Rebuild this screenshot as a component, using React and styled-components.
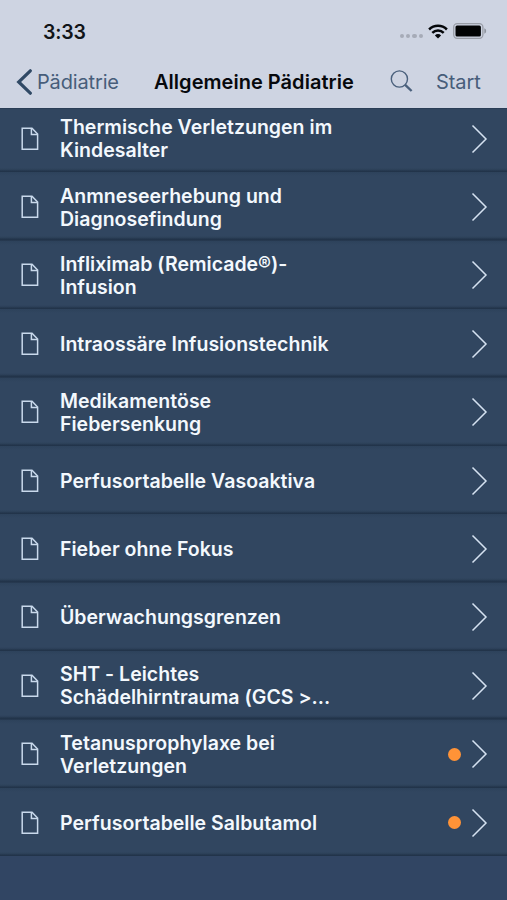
import styled, { createGlobalStyle } from "styled-components"

const documents = [
    { lines: ["Thermische Verletzungen im", "Kindesalter"] },
    { lines: ["Anmneseerhebung und", "Diagnosefindung"] },
    { lines: ["Infliximab (Remicade®)-", "Infusion"] },
    { lines: ["Intraossäre Infusionstechnik"] },
    { lines: ["Medikamentöse", "Fiebersenkung"] },
    { lines: ["Perfusortabelle Vasoaktiva"] },
    { lines: ["Fieber ohne Fokus"] },
    { lines: ["Überwachungsgrenzen"] },
    { lines: ["SHT - Leichtes", "Schädelhirntrauma (GCS >..."] },
    { lines: ["Tetanusprophylaxe bei", "Verletzungen"], unread: true },
    { lines: ["Perfusortabelle Salbutamol"], unread: true },
]

const FileIcon = () => (
    <svg width="18" height="24" viewBox="0 0 18 24" fill="none" stroke="#c9d9ec" strokeWidth="1.5">
        <path d="M1.2 1.2H11L16.6 7V22.3H1.2Z" />
        <path d="M10.4 1.4V7.4H16.4" />
    </svg>
)

const ChevronIcon = () => (
    <svg width="18" height="30" viewBox="0 0 18 30" fill="none" stroke="#d5e2f1" strokeWidth="1.5">
        <path d="M1.5 1.5L15 15L1.5 28.5" />
    </svg>
)

const BackIcon = () => (
    <svg width="16" height="26" viewBox="0 0 16 26" fill="none" stroke="#304965" strokeWidth="3.2">
        <path d="M14.3 1.8L2.7 13L14.3 24.2" strokeLinecap="round" />
    </svg>
)

const SearchIcon = () => (
    <svg width="24" height="24" viewBox="0 0 24 24" fill="none" stroke="#4a607c">
        <circle cx="9.4" cy="9" r="8.1" strokeWidth="1.4" />
        <path d="M15.2 14.9L21.6 21" strokeWidth="2.4" />
    </svg>
)

const WifiIcon = () => (
    <svg width="20" height="15" viewBox="0 0 20 15" fill="none" stroke="#05070a" strokeWidth="2.5">
        <path d="M1.1 5.5A12.6 12.6 0 0 1 18.9 5.5" />
        <path d="M4.3 8.8A8.1 8.1 0 0 1 15.7 8.8" />
        <path d="M10 14.6L6.9 11.4A4.4 4.4 0 0 1 13.1 11.4Z" fill="#05070a" stroke="none" />
    </svg>
)

const BatteryIcon = () => (
    <svg width="34" height="16" viewBox="0 0 34 16">
        <rect x="0.7" y="0.7" width="29.2" height="14.6" rx="3.5" fill="none" stroke="#999da7" strokeWidth="1.3" />
        <rect x="2.5" y="2.5" width="25.4" height="11" rx="1.5" fill="#020304" />
        <path d="M31.3 5.3Q33.2 6 33.2 8T31.3 10.7Z" fill="#8f949e" />
    </svg>
)

export default function App() {
    return (
        <Screen>
            <GlobalStyle />
            <Header>
                <StatusBar>
                    <Time>3:33</Time>
                    <StatusIcons>
                        <Signal>
                            <i />
                            <i />
                            <i />
                            <i />
                        </Signal>
                        <WifiIcon />
                        <BatteryIcon />
                    </StatusIcons>
                </StatusBar>
                <NavBar>
                    <BackButton>
                        <BackIcon />
                        <span>Pädiatrie</span>
                    </BackButton>
                    <Title>Allgemeine Pädiatrie</Title>
                    <SearchButton aria-label="Suche">
                        <SearchIcon />
                    </SearchButton>
                    <NavButton>Start</NavButton>
                </NavBar>
            </Header>
            <Viewport>
                <List>
                    {documents.map(({ lines, unread }) => (
                        <Row key={lines[0]}>
                            <FileIcon />
                            <Label>
                                {lines.map((line) => (
                                    <div key={line}>{line}</div>
                                ))}
                            </Label>
                            {unread && <Dot />}
                            <ChevronIcon />
                        </Row>
                    ))}
                </List>
            </Viewport>
        </Screen>
    )
}

const GlobalStyle = createGlobalStyle`
    body {
        margin: 0;
    }
`

const Screen = styled.div`
    box-sizing: border-box;
    display: flex;
    flex-direction: column;
    width: 507px;
    height: 900px;
    overflow: hidden;
    background: #314563;
    font-family: Inter, "Liberation Sans", sans-serif;

    svg {
        display: block;
        flex: none;
    }
`

const Header = styled.header`
    flex: none;
    box-sizing: border-box;
    height: 108px;
    background: #ced4e2;
`

const StatusBar = styled.div`
    box-sizing: border-box;
    display: flex;
    align-items: center;
    justify-content: space-between;
    height: 62px;
    padding: 0 20px 0 43px;
`

const Time = styled.span`
    margin-top: 1px;
    font-size: 19.5px;
    font-weight: 600;
    color: #111418;
    letter-spacing: -0.2px;
`

const StatusIcons = styled.div`
    display: flex;
    align-items: center;
    gap: 5px;
`

const Signal = styled.div`
    display: flex;
    gap: 2px;
    margin-top: 10px;

    i {
        width: 4.3px;
        height: 4.3px;
        border-radius: 50%;
        background: #a6abb7;
    }
`

const NavBar = styled.nav`
    box-sizing: border-box;
    display: flex;
    align-items: center;
    height: 40px;
    padding: 0 0 0 16px;
`

const NavButton = styled.button`
    padding: 0;
    border: 0;
    background: none;
    font: 400 20px Inter, "Liberation Sans", sans-serif;
    color: #475d7a;
    letter-spacing: -0.05px;
`

const BackButton = styled(NavButton)`
    display: flex;
    align-items: center;
    gap: 5px;
    width: 138px;
    letter-spacing: -0.15px;
    white-space: nowrap;
`

const Title = styled.h1`
    flex: none;
    width: 236px;
    margin: 0;
    font-size: 20px;
    font-weight: 600;
    color: #07090d;
    letter-spacing: 0.03px;
    white-space: nowrap;
`

const SearchButton = styled(NavButton)`
    width: 46px;
`

const Viewport = styled.main`
    flex: 1;
    min-height: 0;
    overflow: hidden;
    border-top: 1px solid #2a3d56;
`

/* scrolled a few pixels, so the first row starts under the header */
const List = styled.ul`
    margin: -5px 0 0;
    padding: 0;
    list-style: none;
`

const Row = styled.li`
    box-sizing: border-box;
    display: flex;
    align-items: center;
    height: 68.4px;
    padding: 1px 18px 0 21px;
    background: linear-gradient(#2d425b, #314660 4px, #314660 64px, #2b3f57 66px, #22344a 67px, #22344a 68px, #2a3d55);
`

const Label = styled.div`
    flex: 1;
    margin: 1px 0 0 21px;
    font-size: 19.5px;
    font-weight: 600;
    line-height: 23px;
    color: #f3f8fd;
    letter-spacing: 0.02px;
    white-space: nowrap;
`

const Dot = styled.span`
    width: 13px;
    height: 13px;
    margin-right: 10px;
    border-radius: 50%;
    background: #ff9337;
`
